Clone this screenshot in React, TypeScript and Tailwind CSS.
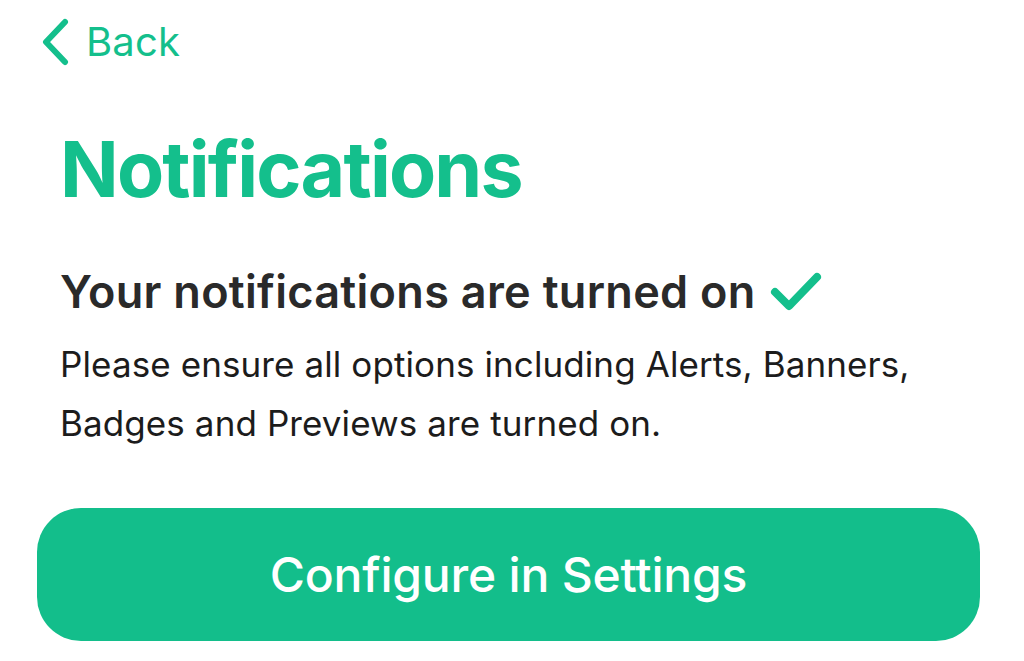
import React from 'react'

const font = { fontFamily: 'Inter, "Noto Sans", sans-serif' }

export default function App() {
  return (
    <div className="w-[1024px] h-[661px] bg-white overflow-hidden" style={font}>
      <div className="pt-[14px] pl-[40px]">
        <button className="flex items-center gap-[16px] text-[#14bf8c]">
          <svg width="30" height="48" viewBox="0 0 30 48" fill="none">
            <path d="M25 4 L6 24 L25 44" stroke="#14bf8c" strokeWidth="6" strokeLinecap="round" strokeLinejoin="round" />
          </svg>
          <span className="text-[40px] leading-[56px] tracking-[0.2px]">Back</span>
        </button>
      </div>

      <div className="px-[60px]">
        <h1 className="mt-[54px] text-[77px] leading-[90px] font-bold text-[#14bf8c] tracking-[-1.8px]">Notifications</h1>

        <div className="mt-[50px] flex items-center gap-[14px]">
          <h2 className="text-[45px] leading-[56px] font-semibold text-[#2a2a2a] tracking-[0.3px]">Your notifications are turned on</h2>
          <svg width="52" height="40" viewBox="0 0 52 40" fill="none">
            <path d="M5 20 L19 34 L47 5" stroke="#14bf8c" strokeWidth="8" strokeLinecap="round" strokeLinejoin="round" />
          </svg>
        </div>

        <p className="mt-[15px] text-[35px] leading-[59px] text-[#1c1c1c] tracking-[0.1px]">
          Please ensure all options including Alerts, Banners,
          <br />
          Badges and Previews are turned on.
        </p>
      </div>

      <div className="px-[37px] mt-[55px]">
        <button className="w-[943px] h-[133px] rounded-[44px] bg-[#13be8b] text-white text-[48px] font-medium tracking-[-0.2px] flex items-center justify-center">
          Configure in Settings
        </button>
      </div>
    </div>
  )
}
